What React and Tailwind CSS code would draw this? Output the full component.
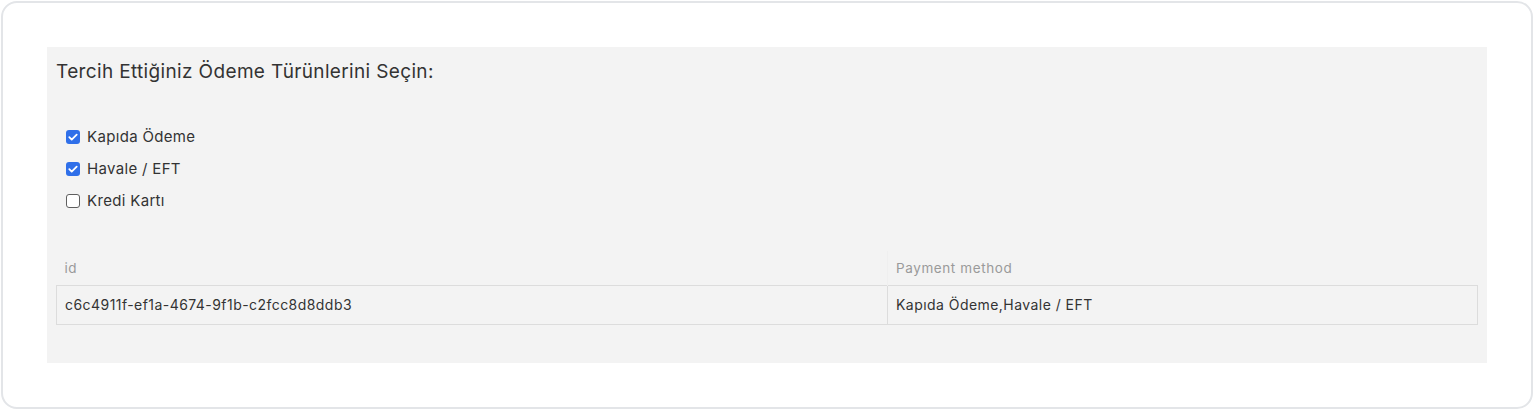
import { useState } from "react";

const methods = ["Kapıda Ödeme", "Havale / EFT", "Kredi Kartı"];

export default function App() {
  const [selected, setSelected] = useState(["Kapıda Ödeme", "Havale / EFT"]);

  const toggle = (m) =>
    setSelected((s) => (s.includes(m) ? s.filter((x) => x !== m) : [...s, m]));

  return (
    <div className="w-[1534px] h-[410px] bg-white p-px" style={{ fontFamily: "Inter, 'Open Sans', sans-serif" }}>
      <div className="h-full rounded-2xl border-2 border-[#e3e5e8] px-[44px] pt-[44px]">
        <div className="bg-[#f3f3f3] h-[316px] px-[9px] pt-[12px]">
          {/* Title */}
          <h2 className="text-[19px] leading-[26px] tracking-[0.35px] text-[#333]">
            Tercih Ettiğiniz Ödeme Türünlerini Seçin:
          </h2>

          {/* Options */}
          <div className="mt-[43px] pl-[10px] flex flex-col gap-[14px]">
            {methods.map((m) => {
              const on = selected.includes(m);
              return (
                <label key={m} className="flex items-center gap-[7px] h-[18px] text-[15px] tracking-[0.33px] text-[#333] cursor-pointer">
                  <input type="checkbox" checked={on} onChange={() => toggle(m)} className="sr-only" />
                  <span
                    className={`w-[14px] h-[14px] rounded-[3px] flex items-center justify-center ${
                      on ? "bg-[#2f6fe9]" : "border-[1.5px] border-[#5f5f5f] bg-white"
                    }`}
                  >
                    {on && (
                      <svg viewBox="0 0 14 14" className="w-[14px] h-[14px]" fill="none" stroke="white" strokeWidth="1.8" strokeLinecap="round" strokeLinejoin="round">
                        <path d="M3.3 7.2l2.4 2.4 5-5" />
                      </svg>
                    )}
                  </span>
                  {m}
                </label>
              );
            })}
          </div>

          {/* Table */}
          <table className="mt-[41px] w-full border-collapse text-[14px] tracking-[0.45px] text-[#333]">
            <thead>
              <tr className="h-[34px]">
                <th className="w-[831px] text-left font-normal text-[13.5px] tracking-[0.6px] text-[#9a9a9a] px-[8px] border-r border-[#efefef]">id</th>
                <th className="text-left font-normal text-[13.5px] tracking-[0.6px] text-[#9a9a9a] px-[8px]">Payment method</th>
              </tr>
            </thead>
            <tbody>
              <tr className="h-[39px]">
                <td className="border border-[#dcdcdc] px-[8px]">c6c4911f-ef1a-4674-9f1b-c2fcc8d8ddb3</td>
                <td className="border border-[#dcdcdc] px-[8px]">{selected.join(",")}</td>
              </tr>
            </tbody>
          </table>
        </div>
      </div>
    </div>
  );
}
